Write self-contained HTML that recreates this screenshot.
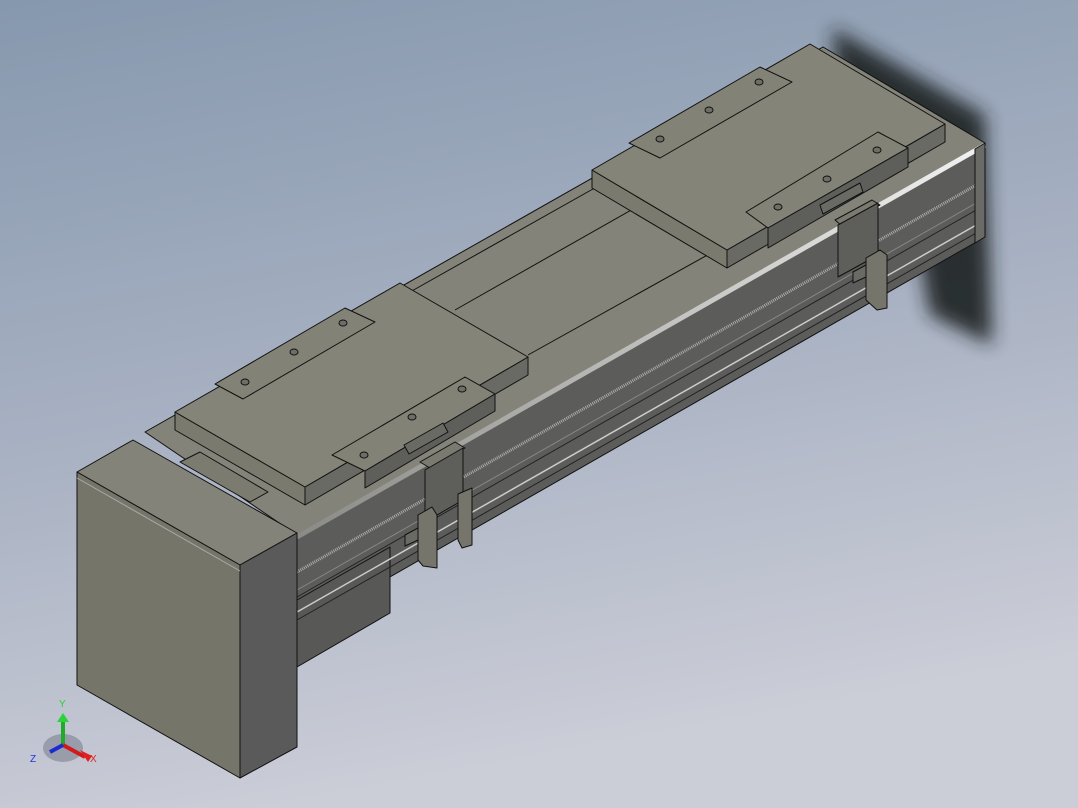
<!DOCTYPE html>
<html><head><meta charset="utf-8"><style>
html,body{margin:0;padding:0;width:1078px;height:808px;overflow:hidden}
svg{display:block}
</style></head><body>
<svg width="1078" height="808" viewBox="0 0 1078 808" xmlns="http://www.w3.org/2000/svg">
<defs>
<linearGradient id="bg" x1="0" y1="0" x2="0.25" y2="1">
<stop offset="0" stop-color="#8698ae"/><stop offset="0.55" stop-color="#a9b2c3"/><stop offset="1" stop-color="#cbcdd7"/>
</linearGradient>
<filter id="bl" x="-30%" y="-30%" width="160%" height="160%"><feGaussianBlur stdDeviation="9"/></filter>
<linearGradient id="hl" x1="0" y1="0" x2="0" y2="1"><stop offset="0" stop-color="#f2f2f2"/><stop offset="1" stop-color="#8a8a86"/></linearGradient>
</defs>
<rect width="1078" height="808" fill="url(#bg)"/>
<!-- shadow -->
<polygon points="832,28 985,115 992,345 930,315 900,150 840,90" fill="#1e2024" opacity="0.9" filter="url(#bl)"/>
<g stroke="#111" stroke-width="1" stroke-linejoin="round">
<!-- rail top -->
<polygon points="145,432 823,47 985,143 297,535" fill="#848379"/>
<!-- center channel -->
<polyline points="410,292 600,185" fill="none"/>
<polyline points="455,310 640,205" fill="none"/>
<polyline points="528,355 720,248" fill="none"/>
<polygon points="180,462 200,452 268,492 250,502" fill="#7c7b70"/>
<!-- rail front -->
<polygon points="297,535 985,143 985,237 297,630" fill="#5c5c5a"/>
<polygon points="297,600 390,547 390,613 297,667" fill="#585856"/>
<line x1="297" y1="572" x2="985" y2="180" stroke="#aaa" stroke-width="3" stroke-dasharray="1 1"/>
<line x1="297" y1="590" x2="985" y2="198" stroke="#888"/>
<line x1="297" y1="597" x2="985" y2="205" stroke="#222"/>
<line x1="297" y1="612" x2="985" y2="220" stroke="#ccc" stroke-width="1.5"/>
<line x1="297" y1="620" x2="985" y2="228" stroke="#222"/>
<line x1="297" y1="537" x2="985" y2="145" stroke="url(#hl)" stroke-width="5"/>
<polygon points="975,149 985,143 985,237 975,243" fill="#6a6a66"/>
<!-- end cap -->
<polygon points="77,472 133,440 297,533 240,565" fill="#848379"/>
<polygon points="77,472 240,565 240,778 77,685" fill="#76756a"/>
<polygon points="240,565 297,533 297,747 240,778" fill="#5a5a5a"/>
<line x1="77" y1="478" x2="240" y2="571" stroke="#aaa" stroke-width="1"/>
<!-- left plate -->
<polygon points="175,412 305,487 305,505 175,430" fill="#7a7a6e"/>
<polygon points="305,487 528,357 528,375 305,505" fill="#6a6a64"/>
<polygon points="175,412 400,283 528,357 305,487" fill="#858479"/>
<polygon points="215,384 345,308 375,322 243,399" fill="#838277"/>
<polygon points="332,455 465,377 495,394 365,471" fill="#838277"/>
<polygon points="365,471 495,394 495,411 365,488" fill="#5e5e5a"/>
<!-- right plate -->
<polygon points="592,170 727,250 727,268 592,188" fill="#7a7a6e"/>
<polygon points="727,250 945,124 945,142 727,268" fill="#6a6a64"/>
<polygon points="592,170 810,44 945,124 727,250" fill="#858479"/>
<polygon points="629,143 760,67 792,82 660,158" fill="#838277"/>
<polygon points="746,212 878,132 908,148 768,228" fill="#838277"/>
<polygon points="768,228 908,148 908,167 768,248" fill="#5e5e5a"/>
<!-- holes -->
<g fill="#6f6e66">
<ellipse cx="245" cy="382" rx="4" ry="3"/><ellipse cx="294" cy="352" rx="4" ry="3"/><ellipse cx="343" cy="323" rx="4" ry="3"/>
<ellipse cx="364" cy="455" rx="4" ry="3"/><ellipse cx="412" cy="417" rx="4" ry="3"/><ellipse cx="462" cy="389" rx="4" ry="3"/>
<ellipse cx="660" cy="139" rx="4" ry="3"/><ellipse cx="709" cy="110" rx="4" ry="3"/><ellipse cx="759" cy="82" rx="4" ry="3"/>
<ellipse cx="778" cy="207" rx="4" ry="3"/><ellipse cx="827" cy="179" rx="4" ry="3"/><ellipse cx="877" cy="150" rx="4" ry="3"/>
</g>
<!-- left bracket -->
<polygon points="404,445 443,423 448,432 409,454" fill="#6a6a64"/>
<polygon points="420,462 455,442 465,448 430,468" fill="#7a7a70"/>
<polygon points="425,470 463,448 463,500 425,522" fill="#5e5e5a"/>
<polygon points="418,515 432,507 437,515 437,568 423,566 418,560" fill="#76756c"/>
<polygon points="458,494 472,488 472,545 462,548 458,540" fill="#76756c"/>
<polygon points="405,535 418,528 418,540 405,546" fill="#6a6a64"/>
<!-- right bracket -->
<polygon points="820,205 860,183 863,192 823,214" fill="#6a6a64"/>
<polygon points="835,220 872,200 880,205 842,226" fill="#7a7a70"/>
<polygon points="838,225 878,203 878,255 838,277" fill="#5e5e5a"/>
<polygon points="866,258 880,250 887,255 887,308 877,310 866,300" fill="#76756c"/>
<polygon points="853,272 866,265 866,277 853,283" fill="#6a6a64"/>
</g>
<!-- triad -->
<g font-family="Liberation Sans, sans-serif" font-size="10">
<ellipse cx="63" cy="748" rx="20" ry="14" fill="#7d8190" opacity="0.6"/>
<line x1="63" y1="745" x2="63" y2="720" stroke="#1faa2a" stroke-width="4"/>
<polygon points="57,722 69,722 63,713" fill="#2bd23a"/>
<line x1="63" y1="745" x2="85" y2="757" stroke="#d01b1b" stroke-width="4"/>
<polygon points="80,750 88,762 92,756" fill="#e02020"/>
<line x1="63" y1="745" x2="50" y2="752" stroke="#1b2bd0" stroke-width="4"/>
<text x="59" y="707" fill="#2bd23a">Y</text>
<text x="90" y="762" fill="#e02020">X</text>
<text x="30" y="762" fill="#2233dd">Z</text>
</g>
</svg>
</body></html>
